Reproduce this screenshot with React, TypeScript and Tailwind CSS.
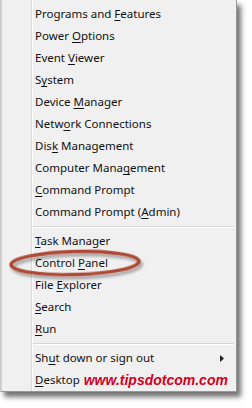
import React from "react";

type Item = { pre: string; key: string; post: string; arrow?: boolean };

const group1: Item[] = [
  { pre: "Programs and ", key: "F", post: "eatures" },
  { pre: "Power ", key: "O", post: "ptions" },
  { pre: "Event ", key: "V", post: "iewer" },
  { pre: "S", key: "y", post: "stem" },
  { pre: "Device ", key: "M", post: "anager" },
  { pre: "Netw", key: "o", post: "rk Connections" },
  { pre: "Dis", key: "k", post: " Management" },
  { pre: "Computer Mana", key: "g", post: "ement" },
  { pre: "", key: "C", post: "ommand Prompt" },
  { pre: "Command Prompt (", key: "A", post: "dmin)" },
];
const group2: Item[] = [
  { pre: "", key: "T", post: "ask Manager" },
  { pre: "Control ", key: "P", post: "anel" },
  { pre: "File ", key: "E", post: "xplorer" },
  { pre: "", key: "S", post: "earch" },
  { pre: "", key: "R", post: "un" },
];

function Row({ item, children }: { item: Item; children?: React.ReactNode }) {
  return (
    <div className="h-[22px] flex items-center pl-[2px] pr-[12px] whitespace-nowrap">
      <span>
        {item.pre}
        <span className="underline underline-offset-[2px] decoration-[1px]">{item.key}</span>
        {item.post}
      </span>
      {children}
    </div>
  );
}

function Sep() {
  return (
    <div className="h-[7px] flex flex-col justify-center">
      <div className="h-[1px] bg-[#d7d7d7] mr-[2px]" />
      <div className="h-[1px] bg-white mr-[2px]" />
    </div>
  );
}

export default function App() {
  return (
    <div className="w-[252px] h-[408px] bg-white relative overflow-hidden">
      <div
        className="w-[237px] flex bg-[#f0f0f0] border-l-2 border-r border-b border-l-[#cfcfcf] border-r-[#979797] border-b-[#979797] shadow-[4px_5px_5px_rgba(0,0,0,0.55)] text-[11.5px] text-[#111]"
        style={{ fontFamily: '"Noto Sans", sans-serif' }}
      >
        <div className="w-[29px] shrink-0" />
        <div className="flex-1 min-w-0 border-l border-[#d9d9d9] shadow-[inset_1px_0_0_#ffffff] pt-[3px] pl-[1px]">
          {group1.map((it, i) => (
            <Row key={i} item={it} />
          ))}
          <Sep />
          {group2.map((it, i) => (
            <Row key={i} item={it} />
          ))}
          <Sep />
          <Row item={{ pre: "Sh", key: "u", post: "t down or sign out" }}>
            <span className="ml-auto flex items-center">
              <svg width="4" height="7" viewBox="0 0 4 7">
                <path d="M0 0 L4 3.5 L0 7 Z" fill="#222" />
              </svg>
            </span>
          </Row>
          <Row item={{ pre: "", key: "D", post: "esktop" }}>
            <span
              className="ml-[4px] text-[14px] font-bold italic text-[#d3001d]"
              style={{ fontFamily: '"Liberation Sans", Arial, sans-serif' }}
            >
              www.tipsdotcom.com
            </span>
          </Row>
        </div>
      </div>
      <svg
        className="absolute left-0 top-[240px] pointer-events-none"
        width="160"
        height="50"
        viewBox="0 240 160 50"
      >
        <defs>
          <filter id="sh" x="-20%" y="-50%" width="140%" height="200%">
            <feDropShadow dx="2" dy="3" stdDeviation="1.5" floodColor="#000" floodOpacity="0.35" />
          </filter>
        </defs>
        <ellipse
          cx="75"
          cy="263"
          rx="64"
          ry="11.5"
          fill="none"
          stroke="#ad4a35"
          strokeWidth="3.5"
          transform="rotate(-1.5 75 263)"
          filter="url(#sh)"
        />
      </svg>
    </div>
  );
}
